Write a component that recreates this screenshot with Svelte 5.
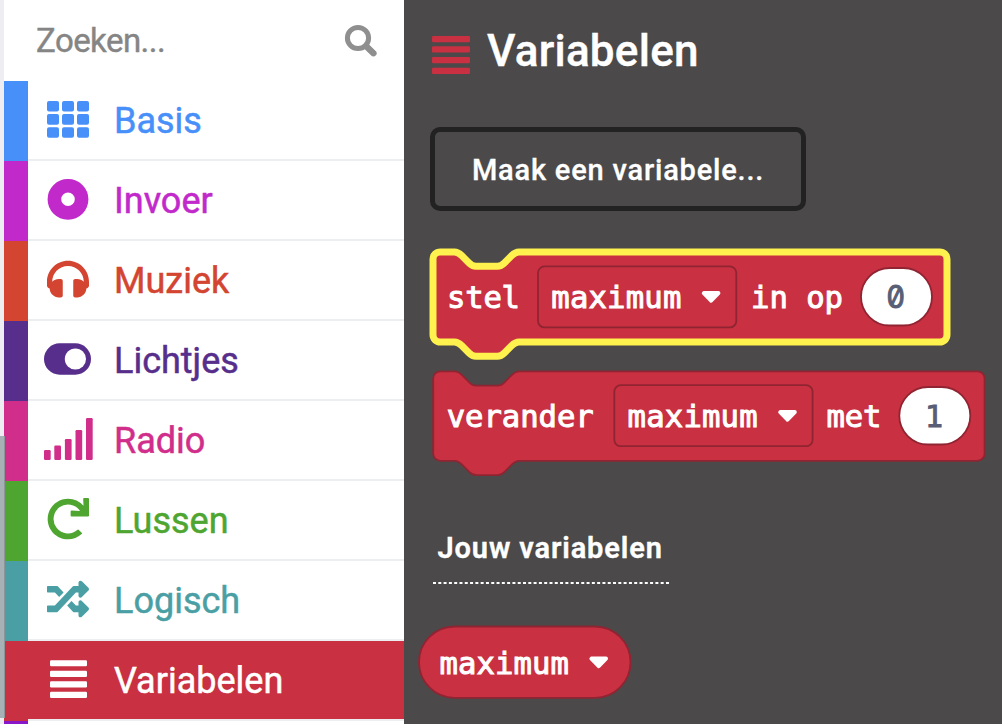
<script>
  const U = 1.79;

  const categories = [
    { name: 'Basis', color: '#478ff9', icon: 'grid' },
    { name: 'Invoer', color: '#c229cb', icon: 'disc' },
    { name: 'Muziek', color: '#d34431', icon: 'headphones' },
    { name: 'Lichtjes', color: '#572e8b', icon: 'toggle' },
    { name: 'Radio', color: '#d02e8a', icon: 'signal' },
    { name: 'Lussen', color: '#4ea631', icon: 'redo' },
    { name: 'Logisch', color: '#4a9fa5', icon: 'random' },
    { name: 'Variabelen', color: '#c93041', icon: 'list', selected: true }
  ];

  const signal = [[0, 32, 10], [10.3, 27.5, 14.5], [20.9, 21, 21], [31.5, 12, 30], [42, 0, 42]];

  // Outline of a statement block: notch in the top edge, tab in the bottom edge.
  function blockPath(x, y, w, h) {
    const r = 4 * U;
    const p = (...n) => n.map((v) => (v * U).toFixed(2)).join(' ');
    return `M${x} ${y + r}a${r} ${r} 0 0 1 ${r} ${-r}h${8 * U}` +
      `c${p(2, 0, 3, 1, 4, 2)}l${p(4, 4)}c${p(1, 1, 2, 2, 4, 2)}h${12 * U}` +
      `c${p(2, 0, 3, -1, 4, -2)}l${p(4, -4)}c${p(1, -1, 2, -2, 4, -2)}` +
      `H${x + w - r}a${r} ${r} 0 0 1 ${r} ${r}V${y + h - r}a${r} ${r} 0 0 1 ${-r} ${r}` +
      `H${x + 48 * U}c${p(-2, 0, -3, 1, -4, 2)}l${p(-4, 4)}c${p(-1, 1, -2, 2, -4, 2)}h${-12 * U}` +
      `c${p(-2, 0, -3, -1, -4, -2)}l${p(-4, -4)}c${p(-1, -1, -2, -2, -4, -2)}` +
      `H${x + r}a${r} ${r} 0 0 1 ${-r} ${-r}z`;
  }
</script>

{#snippet arrow(x, y)}
  <path class="arrow" d="M{x + 2} {y + 2.6}h14.6l-7.3 7.6z" />
{/snippet}

<div class="editor">
  <div class="gutter"><div class="thumb"></div></div>

  <aside class="toolbox">
    <div class="search">
      <span>Zoeken...</span>
      <svg width="34" height="34" viewBox="0 0 34 34" fill="none" stroke="#8f8f8f">
        <circle cx="14" cy="14" r="10.6" stroke-width="5" />
        <path d="M21.5 21.5L30.2 29.6" stroke-width="5" stroke="#8f8f8f" />
        <path d="M22 22L29.4 29.2" stroke-width="6.4" stroke-linecap="round" />
      </svg>
    </div>

    {#each categories as c}
      <div class="row" class:selected={c.selected} style="--c: {c.color}">
        <div class="stripe"></div>
        <div class="cell">
          <div class="icon">
            {#if c.icon === 'grid'}
              <svg width="42" height="37" viewBox="0 0 42 37">
                {#each [0, 13.1, 26.2] as y}
                  {#each [0, 15, 30] as x}
                    <rect {x} {y} width="12" height="10.6" rx="2" />
                  {/each}
                {/each}
              </svg>
            {:else if c.icon === 'disc'}
              <svg width="42" height="42" viewBox="0 0 42 42">
                <circle cx="21" cy="21.3" r="13.6" fill="none" stroke="currentColor" stroke-width="13.6" />
              </svg>
            {:else if c.icon === 'headphones'}
              <svg width="42" height="42" viewBox="0 0 512 512">
                <path d="M256 32C114.52 32 0 146.497 0 288v48a32 32 0 0 0 17.689 28.622l14.383 7.191C34.083 431.903 83.421 480 144 480h24c13.255 0 24-10.745 24-24V280c0-13.255-10.745-24-24-24h-24c-31.342 0-59.671 12.879-80 33.627V288c0-105.869 86.131-192 192-192s192 86.131 192 192v1.627C427.671 268.879 399.342 256 368 256h-24c-13.255 0-24 10.745-24 24v176c0 13.255 10.745 24 24 24h24c60.579 0 109.917-48.098 111.928-108.187l14.382-7.191A32 32 0 0 0 512 336v-48c0-141.479-114.496-256-256-256z" />
              </svg>
            {:else if c.icon === 'toggle'}
              <svg class="toggle" width="47" height="32" viewBox="0 0 47 32">
                <rect y=".3" width="47" height="31.4" rx="15.7" />
                <circle cx="31.4" cy="16" r="10.6" fill="#fff" />
              </svg>
            {:else if c.icon === 'signal'}
              <svg width="49" height="42" viewBox="0 0 49 42">
                {#each signal as [x, y, h]}
                  <rect {x} {y} width="6.7" height={h} rx="1.2" />
                {/each}
              </svg>
            {:else if c.icon === 'redo'}
              <svg width="42" height="42" viewBox="0 0 512 512">
                <path d="M500.33 0h-47.41a12 12 0 0 0-12 12.57l4 82.76A247.42 247.42 0 0 0 256 8C119.34 8 7.9 119.53 8 256.19 8.1 393.07 119.1 504 256 504a247.1 247.1 0 0 0 166.18-63.91 12 12 0 0 0 .48-17.43l-34-34a12 12 0 0 0-16.38-.55A176 176 0 1 1 402.1 157.8l-101.53-4.87a12 12 0 0 0-12.57 12v47.41a12 12 0 0 0 12 12h200.33a12 12 0 0 0 12-12V12a12 12 0 0 0-12-12z" />
              </svg>
            {:else if c.icon === 'random'}
              <svg width="42" height="42" viewBox="0 0 512 512">
                <path d="M504.971 359.029c9.373 9.373 9.373 24.569 0 33.941l-80 79.984c-15.01 15.01-40.971 4.49-40.971-16.971V416h-58.785a12.004 12.004 0 0 1-8.773-3.812l-70.556-75.596 53.333-57.143L352 336h32v-39.981c0-21.438 25.943-31.998 40.971-16.971l80 79.981zM12 176h84l52.781 56.551 53.333-57.143-70.556-75.596A11.999 11.999 0 0 0 122.785 96H12c-6.627 0-12 5.373-12 12v56c0 6.627 5.373 12 12 12zm372 0v39.984c0 21.46 25.961 31.98 40.971 16.971l80-79.984c9.373-9.373 9.373-24.569 0-33.941l-80-79.981C409.943 24.021 384 34.582 384 56.019V96h-58.785a12.004 12.004 0 0 0-8.773 3.812L96 336H12c-6.627 0-12 5.373-12 12v56c0 6.627 5.373 12 12 12h110.785c3.326 0 6.503-1.381 8.773-3.812L352 176h32z" />
              </svg>
            {:else}
              <svg width="37" height="38" viewBox="0 0 37 38">
                {#each [0.2, 10.8, 21.3, 31.8] as y}
                  <rect {y} width="37" height="6.1" rx="1.2" />
                {/each}
              </svg>
            {/if}
          </div>
          <span class="label">{c.name}</span>
        </div>
      </div>
    {/each}
    <div class="row" style="--c: #8817c7">
      <div class="stripe"></div>
      <div class="cell"></div>
    </div>
  </aside>

  <main class="flyout">
    <header>
      <svg width="38" height="38" viewBox="0 0 38 38" fill="#c93041">
        {#each [0, 10.2, 21, 31.8] as y}
          <rect {y} width="38" height="6.2" rx="1.2" />
        {/each}
      </svg>
      <h1>Variabelen</h1>
    </header>

    <button>Maak een variabele...</button>

    <svg class="block" width="586" height="122" viewBox="416 242 586 122">
      <path d={blockPath(433, 252, 514, 90)} fill="#c93041" stroke="#fff24f" stroke-width="7" />
      <text x="447" y="308" textLength="73">stel</text>
      <rect class="field" x="538" y="266.4" width="198.3" height="61" rx="6.5" />
      <text x="551.3" y="308" textLength="130">maximum</text>
      {@render arrow(701.8, 290.5)}
      <text x="751" y="308" textLength="92">in op</text>
      <rect class="value" x="861" y="268" width="71" height="57.5" rx="28.7" />
      <text class="number zero" x="886.6" y="308" textLength="18.4" lengthAdjust="spacingAndGlyphs">0</text>
    </svg>

    <svg class="block" width="586" height="120" viewBox="416 364 586 120">
      <path d={blockPath(433.2, 371.3, 551.4, 89.5)} fill="#c93041" stroke="#912432" stroke-width="1.8" />
      <text x="446.7" y="427" textLength="147">verander</text>
      <rect class="field" x="614.3" y="385.2" width="198.3" height="61" rx="6.5" />
      <text x="627.6" y="427" textLength="130">maximum</text>
      {@render arrow(778.2, 409.5)}
      <text x="826.4" y="427" textLength="55">met</text>
      <rect class="value" x="899.3" y="387" width="71" height="57.5" rx="28.7" />
      <text class="number" x="934" y="427" text-anchor="middle">1</text>
    </svg>

    <h2>Jouw variabelen</h2>
    <svg class="rule" width="236" height="2" viewBox="0 0 236 2">
      <path d="M0 1H236" stroke="#fff" stroke-width="2" stroke-dasharray="3 2.295" />
    </svg>

    <svg class="block" width="220" height="80" viewBox="416 622 220 80">
      <rect x="419" y="626.5" width="211.5" height="71.3" rx="35.6" fill="#c93041" stroke="#912432" stroke-width="1.8" />
      <text x="439.5" y="674" textLength="129.5">maximum</text>
      {@render arrow(589.4, 656)}
    </svg>
  </main>
</div>

<style>
  .editor {
    display: flex;
    width: 1002px;
    height: 724px;
    overflow: hidden;
    background: #fff;
    font-family: Roboto, sans-serif;
  }
  svg {
    display: block;
    flex: none;
  }
  .gutter {
    width: 4px;
    flex: none;
    background: #eeeef2;
    padding-top: 436px;
    box-sizing: border-box;
  }
  .thumb {
    position: relative;
    z-index: 1;
    width: 5px;
    height: 282px;
    background: #a7b0b4;
    border-right: 1px solid #8d9599;
    box-sizing: border-box;
  }
  .toolbox {
    width: 400px;
    flex: none;
  }
  .search {
    height: 81px;
    box-sizing: border-box;
    padding: 0 26px 0 32px;
    display: flex;
    align-items: center;
    justify-content: space-between;
    font-size: 33px;
    color: #858585;
  }
  .search span {
    letter-spacing: -0.55px;
    -webkit-text-stroke: 0.4px;
  }
  .row {
    display: flex;
    height: 80px;
  }
  .stripe {
    width: 24px;
    background: var(--c);
  }
  .cell {
    flex: 1;
    display: flex;
    align-items: center;
    color: var(--c);
    border-bottom: 2px solid #eceff0;
  }
  .selected .cell {
    background: var(--c);
    color: #fff;
  }
  .icon {
    width: 80px;
    margin-right: 6px;
    display: flex;
    justify-content: center;
    padding-bottom: 2px;
  }
  .icon svg {
    fill: currentColor;
  }
  .icon .toggle {
    margin-right: 1px;
  }
  .label {
    font-size: 36px;
    line-height: 78px;
    padding-top: 2px;
    -webkit-text-stroke: 0.5px;
  }
  .flyout {
    flex: 1;
    display: flex;
    flex-direction: column;
    align-items: flex-start;
    padding-left: 12px;
    background: #4b4949;
    color: #fff;
  }
  header {
    display: flex;
    gap: 17px;
    height: 127px;
    padding: 36px 0 0 16px;
    box-sizing: border-box;
  }
  h1 {
    margin: -11px 0 0;
    font-size: 44px;
    line-height: 52px;
    font-weight: 500;
    letter-spacing: 0.25px;
    -webkit-text-stroke: 0.4px;
  }
  button {
    width: 376px;
    height: 84px;
    margin: 0 0 31px 14px;
    padding: 2px 0 0;
    flex: none;
    border: 5.4px solid #222;
    border-radius: 10px;
    background: none;
    color: #fff;
    font: 500 29px Roboto, sans-serif;
    letter-spacing: 0.8px;
    -webkit-text-stroke: 0.3px;
  }
  .block text {
    font: 30.6px "DejaVu Sans Mono", monospace;
    fill: #fff;
    stroke: #fff;
    stroke-width: 1px;
    white-space: pre;
  }
  .block .number {
    fill: #575e75;
    stroke: #575e75;
    stroke-width: 0.8px;
  }
  .block .zero {
    font-family: Inter, sans-serif;
    font-feature-settings: "zero";
    stroke-width: 1px;
  }
  .field {
    fill: none;
    stroke: #912432;
    stroke-width: 1.8px;
  }
  .value {
    fill: #fff;
    stroke: #912432;
    stroke-width: 1.8px;
  }
  .arrow {
    fill: #fff;
    stroke: #fff;
    stroke-width: 4px;
    stroke-linejoin: round;
  }
  h2 {
    margin: 46px 0 0 21.5px;
    height: 52px;
    font-size: 29px;
    line-height: 36px;
    font-weight: 600;
    letter-spacing: 0.88px;
    -webkit-text-stroke: 0.4px;
  }
  .rule {
    margin: 0 0 38px 17px;
  }
</style>
